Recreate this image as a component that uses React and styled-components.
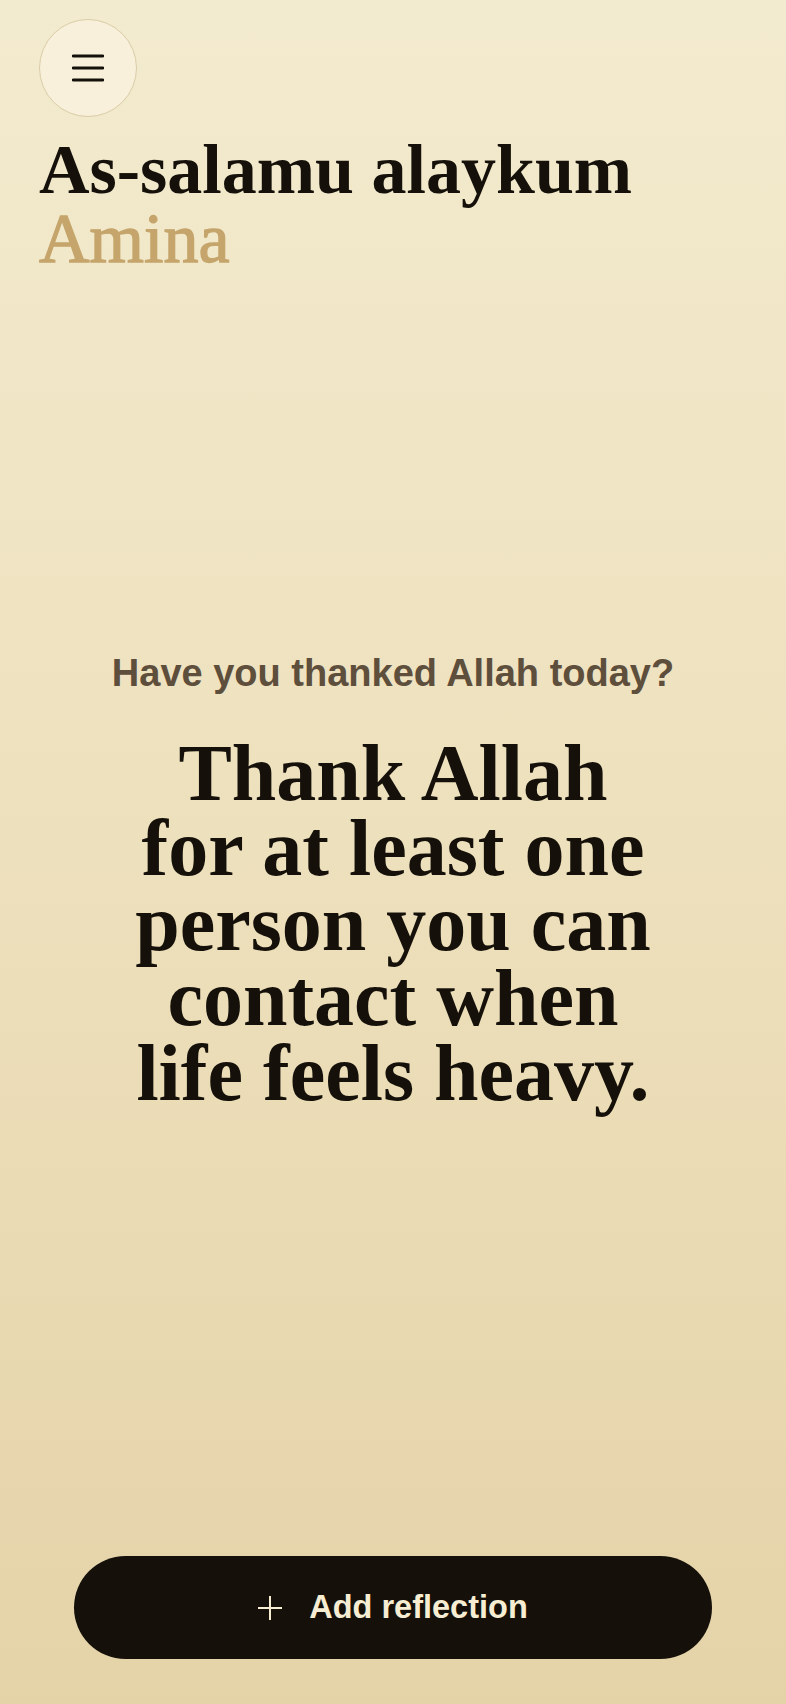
import styled, { createGlobalStyle } from 'styled-components';

const GlobalStyle = createGlobalStyle`
  * {
    box-sizing: border-box;
  }
  html, body {
    margin: 0;
    padding: 0;
  }
  body {
    background: #ecdfba;
  }
`;

const Page = styled.div`
  min-height: 100vh;
  display: flex;
  flex-direction: column;
  padding: 19px 39px 45px;
  background: linear-gradient(180deg, #f3ebcf 0%, #ede0bc 50%, #e5d3a8 100%);
  color: #15110a;
`;

const MenuButton = styled.button`
  width: 98px;
  height: 98px;
  border-radius: 50%;
  border: 1.5px solid #d9cca6;
  background: #f8f0da;
  display: flex;
  align-items: center;
  justify-content: center;
  padding: 0;
  cursor: pointer;
`;

const Greeting = styled.h1`
  margin: 18px 0 0;
  font-family: 'Liberation Serif', 'Times New Roman', serif;
  font-size: 70px;
  line-height: 69px;
  font-weight: 700;
  color: #15110a;

  span {
    display: block;
    font-weight: 400;
    color: #c5a56b;
    -webkit-text-stroke: 1.3px #c5a56b;
  }
`;

const Main = styled.main`
  flex: 1;
  display: flex;
  flex-direction: column;
  align-items: center;
  justify-content: center;
  padding-bottom: 67px;
  text-align: center;
`;

const Prompt = styled.p`
  margin: 0;
  font-family: 'Liberation Sans', Arial, sans-serif;
  font-size: 38px;
  line-height: 44px;
  font-weight: 700;
  color: #5e4e3c;
`;

const Quote = styled.p`
  margin: 41px 0 0;
  max-width: 540px;
  font-family: 'Liberation Serif', 'Times New Roman', serif;
  font-size: 80px;
  line-height: 75px;
  font-weight: 700;
  color: #15110a;
`;

const AddButton = styled.button`
  margin: 0 35px;
  height: 103px;
  border: none;
  border-radius: 52px;
  background: #15110a;
  color: #f6edd2;
  display: flex;
  align-items: center;
  justify-content: center;
  gap: 27px;
  font-family: 'Liberation Sans', Arial, sans-serif;
  font-size: 32.5px;
  font-weight: 700;
  cursor: pointer;
`;

function MenuIcon() {
  return (
    <svg width="32" height="28" viewBox="0 0 32 28" fill="none">
      <path
        d="M1 2h30M1 14h30M1 26h30"
        stroke="#15110a"
        strokeWidth="2.8"
        strokeLinecap="round"
      />
    </svg>
  );
}

function PlusIcon() {
  return (
    <svg width="24" height="24" viewBox="0 0 24 24" fill="none">
      <path d="M12 0v24M0 12h24" stroke="#f6edd2" strokeWidth="2" />
    </svg>
  );
}

export default function App() {
  return (
    <>
      <GlobalStyle />
      <Page>
        <MenuButton aria-label="Menu">
          <MenuIcon />
        </MenuButton>
        <Greeting>
          As-salamu alaykum
          <span>Amina</span>
        </Greeting>
        <Main>
          <Prompt>Have you thanked Allah today?</Prompt>
          <Quote>Thank Allah for at least one person you can contact when life feels heavy.</Quote>
        </Main>
        <AddButton>
          <PlusIcon />
          Add reflection
        </AddButton>
      </Page>
    </>
  );
}
